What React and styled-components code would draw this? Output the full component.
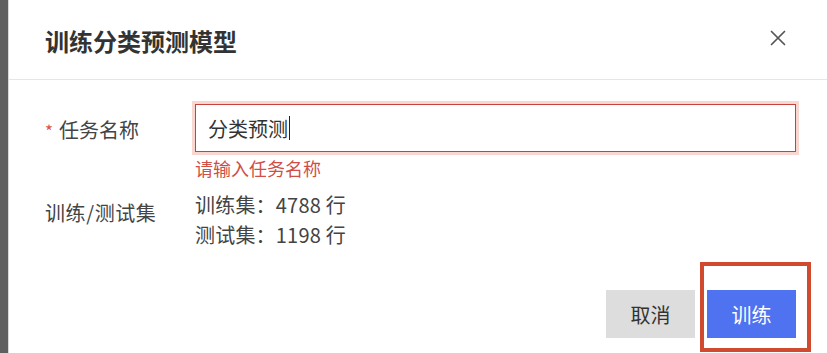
import React from 'react'
import styled, { createGlobalStyle } from 'styled-components'

const Global = createGlobalStyle`
  html, body {
    margin: 0;
    padding: 0;
    height: 353px;
    overflow: hidden;
    background: #ffffff;
    font-family: "Noto Sans CJK SC", "Noto Sans", sans-serif;
  }
`

const App = () => {
  return (
    <Page>
      <Global />
      <Strip />
      <Dialog>
        <Header>
          <Title>训练分类预测模型</Title>
          <Close aria-label="close">
            <svg width="16" height="16" viewBox="0 0 16 16">
              <path d="M1.5 1.5 L14.5 14.5 M14.5 1.5 L1.5 14.5" stroke="#555" strokeWidth="1.7" strokeLinecap="round" fill="none" />
            </svg>
          </Close>
        </Header>
        <Body>
          <Row $top={24}>
            <Label $center>
              <Star>*</Star>任务名称
            </Label>
            <Field>
              <Input>
                分类预测<Caret />
              </Input>
            </Field>
          </Row>
          <Row $top={0}>
            <div />
            <Error>请输入任务名称</Error>
          </Row>
          <Row $top={10}>
            <Label $pad={8} $spacing={0.6}>训练/测试集</Label>
            <Values>
              <Value>训练集：4788 行</Value>
              <Value>测试集：1198 行</Value>
            </Values>
          </Row>
          <Footer>
            <Button $kind="cancel">取消</Button>
            <Button $kind="primary">
              训练
              <Highlight />
            </Button>
          </Footer>
        </Body>
      </Dialog>
    </Page>
  )
}

export default App

const Page = styled.div`
    display: flex;
    width: 827px;
    height: 353px;
`
const Strip = styled.div`
    width: 8px;
    flex-shrink: 0;
    background-color: #5f5f5f;
    border-right: 1px solid #d8d8d8;
`
const Dialog = styled.div`
    flex: 1;
    display: flex;
    flex-direction: column;
    background: #fff;
`
const Header = styled.div`
    height: 79px;
    display: flex;
    align-items: center;
    justify-content: space-between;
    padding: 0 41px 0 36px;
    border-bottom: 1px solid #e6e6e6;
`
const Title = styled.div`
    font-size: 24px;
    font-weight: 700;
    color: #333;
    margin-top: 1px;
`
const Close = styled.div`
    width: 16px;
    height: 16px;
    display: flex;
    margin-top: -4px;
`
const Body = styled.div`
    padding: 0 31px 0 36px;
    display: flex;
    flex-direction: column;
`
const Row = styled.div`
    display: grid;
    grid-template-columns: 150px 1fr;
    margin-top: ${p => p.$top}px;
`
const Label = styled.div`
    font-size: 20px;
    color: #444;
    line-height: 30px;
    letter-spacing: ${p => p.$spacing || 0}px;
    align-self: ${p => (p.$center ? 'center' : 'start')};
    padding-top: ${p => p.$pad || 0}px;
    margin-top: ${p => (p.$center ? '4px' : '0')};
`
const Star = styled.span`
    color: #d9534f;
    margin-right: 6px;
    font-size: 17px;
`
const Field = styled.div`
    display: flex;
`
const Input = styled.div`
    flex: 1;
    height: 48px;
    box-sizing: border-box;
    border: 1px solid #c4443d;
    box-shadow: 0 0 0 3px #fad6d1;
    display: flex;
    align-items: center;
    padding-left: 12px;
    font-size: 20px;
    color: #333;
`
const Caret = styled.span`
    display: inline-block;
    width: 1px;
    height: 24px;
    background: #222;
    margin-left: 1px;
`
const Error = styled.div`
    font-size: 18px;
    color: #cf4f47;
    line-height: 24px;
    margin-top: 4px;
`
const Values = styled.div`
    display: flex;
    flex-direction: column;
`
const Value = styled.div`
    font-size: 20px;
    line-height: 30px;
    color: #444;
    letter-spacing: 0.2px;
`
const Footer = styled.div`
    display: flex;
    justify-content: flex-end;
    gap: 12px;
    margin-top: 40px;
`
const Button = styled.div`
    position: relative;
    width: 89px;
    height: 48px;
    display: flex;
    align-items: center;
    justify-content: center;
    font-size: 20px;
    background: ${p => (p.$kind === 'primary' ? '#4f72f0' : '#dddddd')};
    color: ${p => (p.$kind === 'primary' ? '#fff' : '#333')};
`
const Highlight = styled.div`
    position: absolute;
    top: -28px;
    left: -7px;
    right: -15px;
    bottom: -14px;
    border: 4px solid #d04a2f;
    pointer-events: none;
`
